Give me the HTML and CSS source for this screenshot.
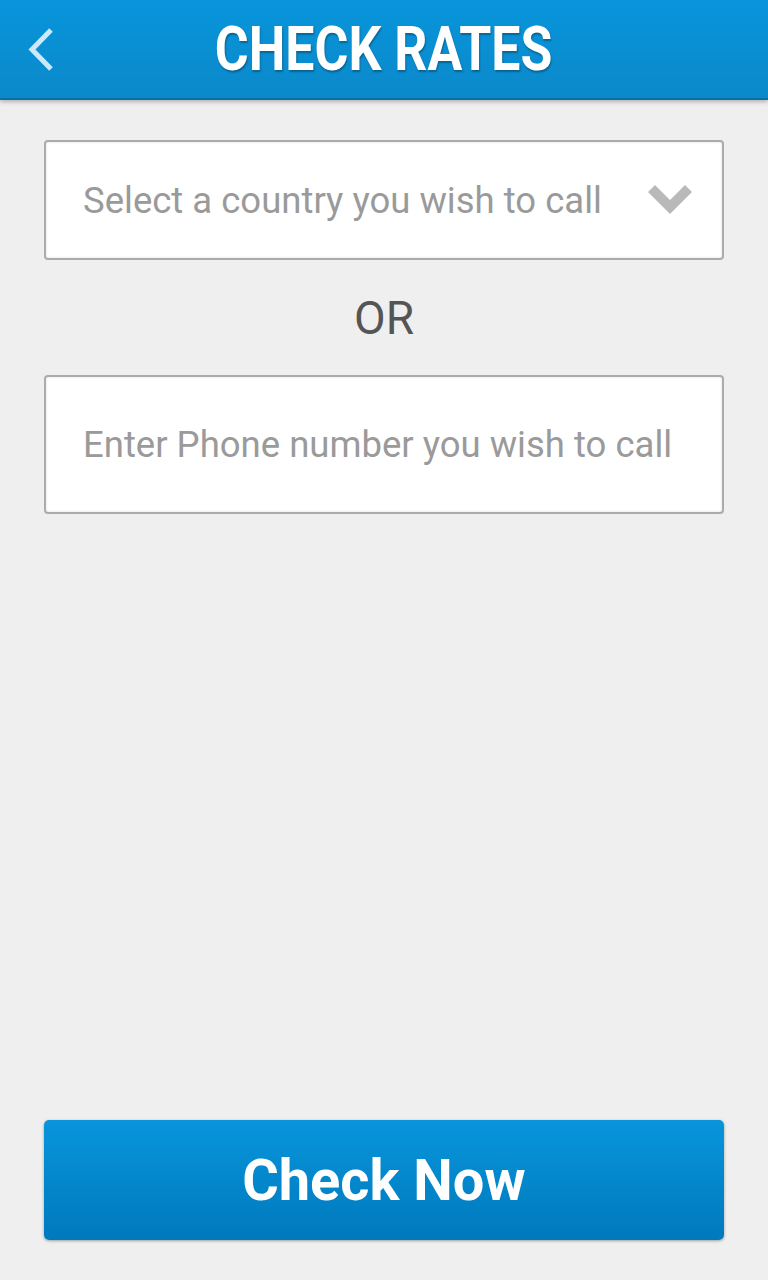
FILE: index.html
```html
<!DOCTYPE html>
<html>
<head>
<meta charset="utf-8">
<link rel="stylesheet" href="styles.css">
</head>
<body>
<div class="screen">
  <header class="topbar">
    <svg class="back" width="34" height="50" viewBox="0 0 34 50"><path d="M29 5 L10 24.5 L29 44" fill="none" stroke="#cde9f8" stroke-width="5"/></svg>
    <h1 class="title"><span>CHECK RATES</span></h1>
  </header>
  <main class="content">
    <div class="field select">
      <span class="ph">Select a country you wish to call</span>
      <svg class="chev" width="48" height="34" viewBox="0 0 48 34"><path d="M2 9 L9 2 L24 17 L39 2 L46 9 L24 31 Z" fill="#b9b9b9"/></svg>
    </div>
    <div class="or">OR</div>
    <div class="field phone">
      <span class="ph">Enter Phone number you wish to call</span>
    </div>
    <div class="spacer"></div>
    <button class="cta"><span>Check Now</span></button>
  </main>
</div>
</body>
</html>
```
FILE: styles.css
```css
html, body { margin: 0; padding: 0; }
body { background: #efefef; font-family: Roboto, "Noto Sans", sans-serif; }
.screen { width: 768px; height: 1280px; display: flex; flex-direction: column; }
.topbar {
  height: 98px; border-bottom: 2px solid #0a6ea3;
  background: linear-gradient(#0895db, #0b89ca);
  box-shadow: 0 2px 4px rgba(0,0,0,0.25);
  display: flex; align-items: center; justify-content: center; position: relative;
}
.back { position: absolute; left: 22px; top: 25px; }
.title { margin: 0; color: #fff; font-weight: 700; font-size: 61px; line-height: 1; text-shadow: 1px 2px 2px rgba(0,0,0,0.3); }
.title span { display: inline-block; transform: scaleX(0.85); }
.content { flex: 1; display: flex; flex-direction: column; padding: 40px 44px 40px 44px; }
.field {
  background: #fff; border: 2px solid #ababab; border-radius: 4px; box-sizing: border-box;
  display: flex; align-items: center; padding-left: 37px;
  box-shadow: inset 0 0 3px rgba(0,0,0,0.12);
}
.select { height: 120px; justify-content: space-between; padding-right: 28px; }
.phone { height: 139px; }
.ph { color: #9a9a9a; font-size: 36.5px; white-space: nowrap; }
.or { text-align: center; color: #555; font-size: 46px; line-height: 1; padding: 35px 0 34px; }
.spacer { flex: 1; }
.cta {
  height: 120px; border: none; border-radius: 5px; color: #fff;
  background: linear-gradient(#0895db, #0079bd);
  box-shadow: 0 1px 3px rgba(0,0,0,0.35);
  font-family: Roboto, sans-serif; font-weight: 700; font-size: 58px; padding: 0;
}
.cta span { display: inline-block; transform: scaleX(0.965); }
```
